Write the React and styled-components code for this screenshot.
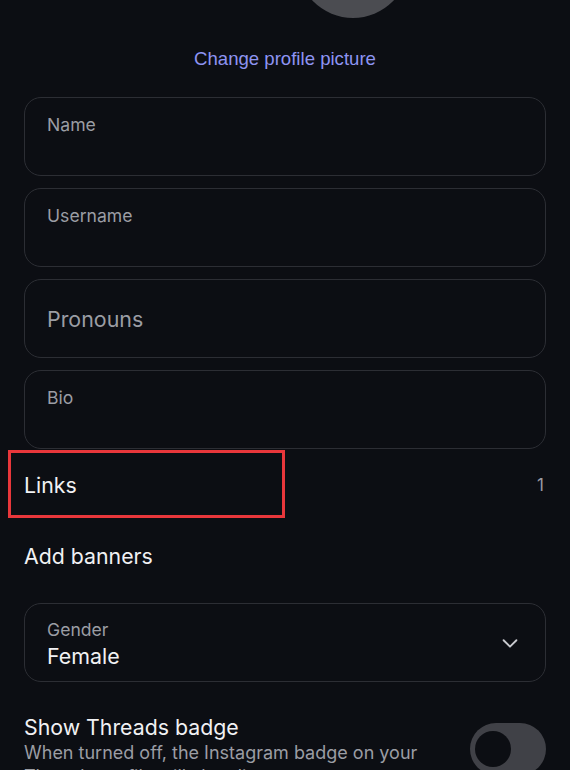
import React from "react";
import styled, { createGlobalStyle } from "styled-components";

const Global = createGlobalStyle`
  html, body { margin: 0; padding: 0; background: #0c0e13; }
  body { font-family: Inter, "Noto Sans", Roboto, sans-serif; color: #f1f1f3; overflow: hidden; }
  * { box-sizing: border-box; }
`;

const Page = styled.div`
  width: 570px;
  height: 770px;
  overflow: hidden;
  background: #0c0e13;
  display: flex;
  flex-direction: column;
  padding: 0 24px;
  & > * { flex: none; }
`;

const AvatarRow = styled.div`
  display: flex;
  justify-content: center;
  padding-left: 136px;
  height: 18px;
  overflow: hidden;
  align-items: flex-end;
`;

const Avatar = styled.div`
  flex: none;
  width: 112px;
  height: 112px;
  border-radius: 50%;
  background: #4b4c51;
`;

const ChangeLink = styled.div`
  text-align: center;
  color: #8e94f2;
  font-size: 18.6px;
  line-height: 22px;
  margin-top: 30px;
  font-family: "Liberation Sans", Arial, sans-serif;
`;

const Fields = styled.div`
  display: flex;
  flex-direction: column;
  gap: 12px;
  margin-top: 27px;
`;

const Field = styled.div`
  flex: none;
  height: 79px;
  border: 1.5px solid #2c2e34;
  border-radius: 17px;
  padding: ${(p) => (p.$center ? "0 22px" : "16px 22px")};
  display: flex;
  flex-direction: ${(p) => (p.$row ? "row" : "column")};
  justify-content: ${(p) => (p.$center ? "center" : p.$row ? "space-between" : "flex-start")};
  align-items: ${(p) => (p.$row ? "center" : "stretch")};
`;

const Label = styled.div`
  color: #9b9da4;
  font-size: ${(p) => (p.$big ? "21.4px" : "17.6px")};
  line-height: 22px;
`;

const Value = styled.div`
  color: #f1f1f3;
  font-size: 21.4px;
  line-height: 26px;
  margin-top: 2px;
`;

const Stack = styled.div`
  display: flex;
  flex-direction: column;
  padding-top: 2px;
`;

const Row = styled.div`
  position: relative;
  height: 71px;
  display: flex;
  align-items: center;
  justify-content: space-between;
  font-size: 21.3px;
  color: #f1f1f3;
`;

const Count = styled.span`
  color: #9b9da4;
  font-size: 17px;
  margin-right: 2px;
`;

const Highlight = styled.div`
  position: absolute;
  left: -16px;
  top: 1px;
  width: 277px;
  height: 68px;
  border: 3px solid #e8373b;
  pointer-events: none;
`;

const Rows = styled.div`
  display: flex;
  flex-direction: column;
`;

const GenderField = styled(Field)`
  margin-top: 12px;
  padding: 0 24px 0 22px;
`;

const Chevron = styled.svg`
  width: 22px;
  height: 22px;
  color: #c9cacf;
`;

const BadgeRow = styled.div`
  display: flex;
  justify-content: space-between;
  align-items: flex-start;
  margin-top: 31px;
`;

const BadgeText = styled.div`
  display: flex;
  flex-direction: column;
  width: 420px;
`;

const BadgeTitle = styled.div`
  font-size: 21.3px;
  line-height: 28px;
  color: #f1f1f3;
`;

const BadgeDesc = styled.div`
  font-size: 18px;
  line-height: 24px;
  color: #9b9da4;
`;

const Toggle = styled.div`
  flex: none;
  width: 76px;
  height: 52px;
  border-radius: 26px;
  background: #404147;
  margin-top: 10px;
  display: flex;
  align-items: center;
  padding-left: 5px;
`;

const Knob = styled.div`
  width: 36px;
  height: 36px;
  border-radius: 50%;
  background: #0c0e13;
`;

export default function App() {
  return (
    <>
      <Global />
      <Page>
        <AvatarRow>
          <Avatar />
        </AvatarRow>
        <ChangeLink>Change profile picture</ChangeLink>
        <Fields>
          <Field>
            <Label>Name</Label>
          </Field>
          <Field>
            <Label>Username</Label>
          </Field>
          <Field $center>
            <Label $big>Pronouns</Label>
          </Field>
          <Field>
            <Label>Bio</Label>
          </Field>
        </Fields>
        <Rows>
          <Row>
            <span>Links</span>
            <Count>1</Count>
            <Highlight />
          </Row>
          <Row>
            <span>Add banners</span>
          </Row>
        </Rows>
        <GenderField $row>
          <Stack>
            <Label>Gender</Label>
            <Value>Female</Value>
          </Stack>
          <Chevron viewBox="0 0 24 24" fill="none" stroke="currentColor" strokeWidth="2" strokeLinecap="round" strokeLinejoin="round">
            <path d="M5 9l7 7 7-7" />
          </Chevron>
        </GenderField>
        <BadgeRow>
          <BadgeText>
            <BadgeTitle>Show Threads badge</BadgeTitle>
            <BadgeDesc>
              When turned off, the Instagram badge on your Threads profile will also disappear.
            </BadgeDesc>
          </BadgeText>
          <Toggle>
            <Knob />
          </Toggle>
        </BadgeRow>
      </Page>
    </>
  );
}
